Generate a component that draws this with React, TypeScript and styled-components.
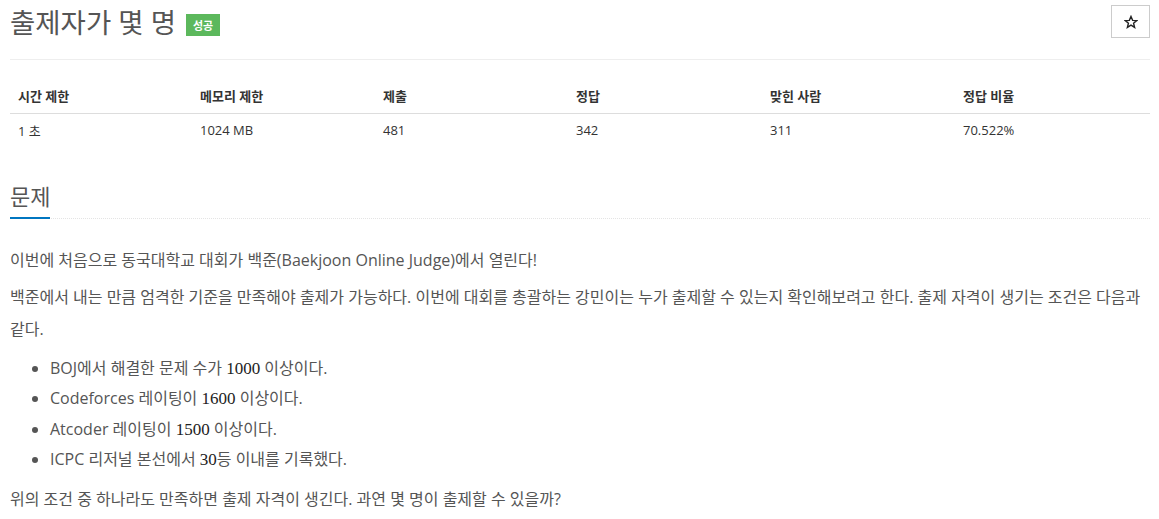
import React from "react";
import styled, { createGlobalStyle } from "styled-components";

const Global = createGlobalStyle`
  html, body { margin: 0; padding: 0; background: #fff; }
  body {
    font-family: "Open Sans", "Noto Sans CJK KR", "Noto Sans", sans-serif;
    color: #555;
  }
  * { box-sizing: border-box; }
`;

const Page = styled.div`
  width: 1140px;
  margin-left: 10px;
`;

const Header = styled.div`
  display: flex;
  justify-content: space-between;
  align-items: flex-start;
  padding-top: 5px;
  padding-bottom: 18px;
  border-bottom: 1px solid #eee;
`;

const TitleGroup = styled.div`
  display: flex;
  align-items: center;
  gap: 10px;
`;

const Title = styled.h1`
  margin: 0;
  font-size: 27.5px;
  line-height: 36px;
  font-weight: 400;
  color: #555;
  font-family: "Open Sans", "Noto Sans CJK KR", sans-serif;
`;

const Badge = styled.span`
  display: inline-flex;
  align-items: center;
  justify-content: center;
  width: 34px;
  height: 22px;
  margin-top: 4px;
  background: #5cb85c;
  color: #fff;
  font-size: 11px;
  font-weight: 700;
`;

const StarButton = styled.button`
  width: 39px;
  height: 33px;
  display: flex;
  align-items: center;
  justify-content: center;
  background: #fff;
  border: 1px solid #ccc;
  padding: 0;
  cursor: pointer;
`;

const Table = styled.div`
  margin-top: 18px;
  display: grid;
  grid-template-columns: 182px 183px 193px 194px 193px 1fr;
  font-size: 13px;
  color: #333;
`;

const HeadCell = styled.div`
  padding: 0 8px;
  height: 36px;
  display: flex;
  align-items: center;
  font-weight: 700;
  border-bottom: 1px solid #ddd;
`;

const BodyCell = styled.div`
  padding: 0 8px;
  height: 32px;
  display: flex;
  align-items: center;
`;

const Headline = styled.div`
  margin-top: 35px;
  display: flex;
  border-bottom: 1px dotted #e4e4e4;
`;

const SectionTitle = styled.h2`
  margin: 0 0 -1px 0;
  font-size: 22px;
  line-height: 30px;
  font-weight: 400;
  color: #555;
  padding-bottom: 6px;
  border-bottom: 2px solid #0076c0;
`;

const Description = styled.div`
  padding-top: 25px;
  font-size: 16px;
  color: #555;
`;

const Para = styled.p`
  margin: 0 0 5px 0;
  line-height: 32px;
`;

const List = styled.ul`
  margin: 8px 0 9px 0;
  padding-left: 40px;
`;

const Item = styled.li`
  line-height: 30.3px;
  &::marker { color: #555; }
`;

const Num = styled.span`
  font-family: "Liberation Serif", "DejaVu Serif", serif;
  font-size: 17px;
  line-height: 1;
  color: #222;
`;

const StarIcon = () => (
  <svg width="14" height="14" viewBox="0 0 24 24" fill="none" stroke="#222" strokeWidth="2.4" strokeLinejoin="miter">
    <polygon points="12,2.5 14.8,9.2 22,9.6 16.4,14.2 18.2,21.3 12,17.4 5.8,21.3 7.6,14.2 2,9.6 9.2,9.2" />
  </svg>
);

const heads = ["시간 제한", "메모리 제한", "제출", "정답", "맞힌 사람", "정답 비율"];
const values = ["1 초", "1024 MB", "481", "342", "311", "70.522%"];

export default function App() {
  return (
    <Page>
      <Global />
      <Header>
        <TitleGroup>
          <Title>출제자가 몇 명</Title>
          <Badge>성공</Badge>
        </TitleGroup>
        <StarButton aria-label="star">
          <StarIcon />
        </StarButton>
      </Header>
      <Table>
        {heads.map((h) => (
          <HeadCell key={h}>{h}</HeadCell>
        ))}
        {values.map((v) => (
          <BodyCell key={v}>{v}</BodyCell>
        ))}
      </Table>
      <Headline>
        <SectionTitle>문제</SectionTitle>
      </Headline>
      <Description>
        <Para>이번에 처음으로 동국대학교 대회가 백준(Baekjoon Online Judge)에서 열린다!</Para>
        <Para>
          백준에서 내는 만큼 엄격한 기준을 만족해야 출제가 가능하다. 이번에 대회를 총괄하는 강민이는 누가 출제할 수 있는지 확인해보려고 한다. 출제 자격이 생기는 조건은 다음과 같다.
        </Para>
        <List>
          <Item>BOJ에서 해결한 문제 수가 <Num>1000</Num> 이상이다.</Item>
          <Item>Codeforces 레이팅이 <Num>1600</Num> 이상이다.</Item>
          <Item>Atcoder 레이팅이 <Num>1500</Num> 이상이다.</Item>
          <Item>ICPC 리저널 본선에서 <Num>30</Num>등 이내를 기록했다.</Item>
        </List>
        <Para>위의 조건 중 하나라도 만족하면 출제 자격이 생긴다. 과연 몇 명이 출제할 수 있을까?</Para>
      </Description>
    </Page>
  );
}
